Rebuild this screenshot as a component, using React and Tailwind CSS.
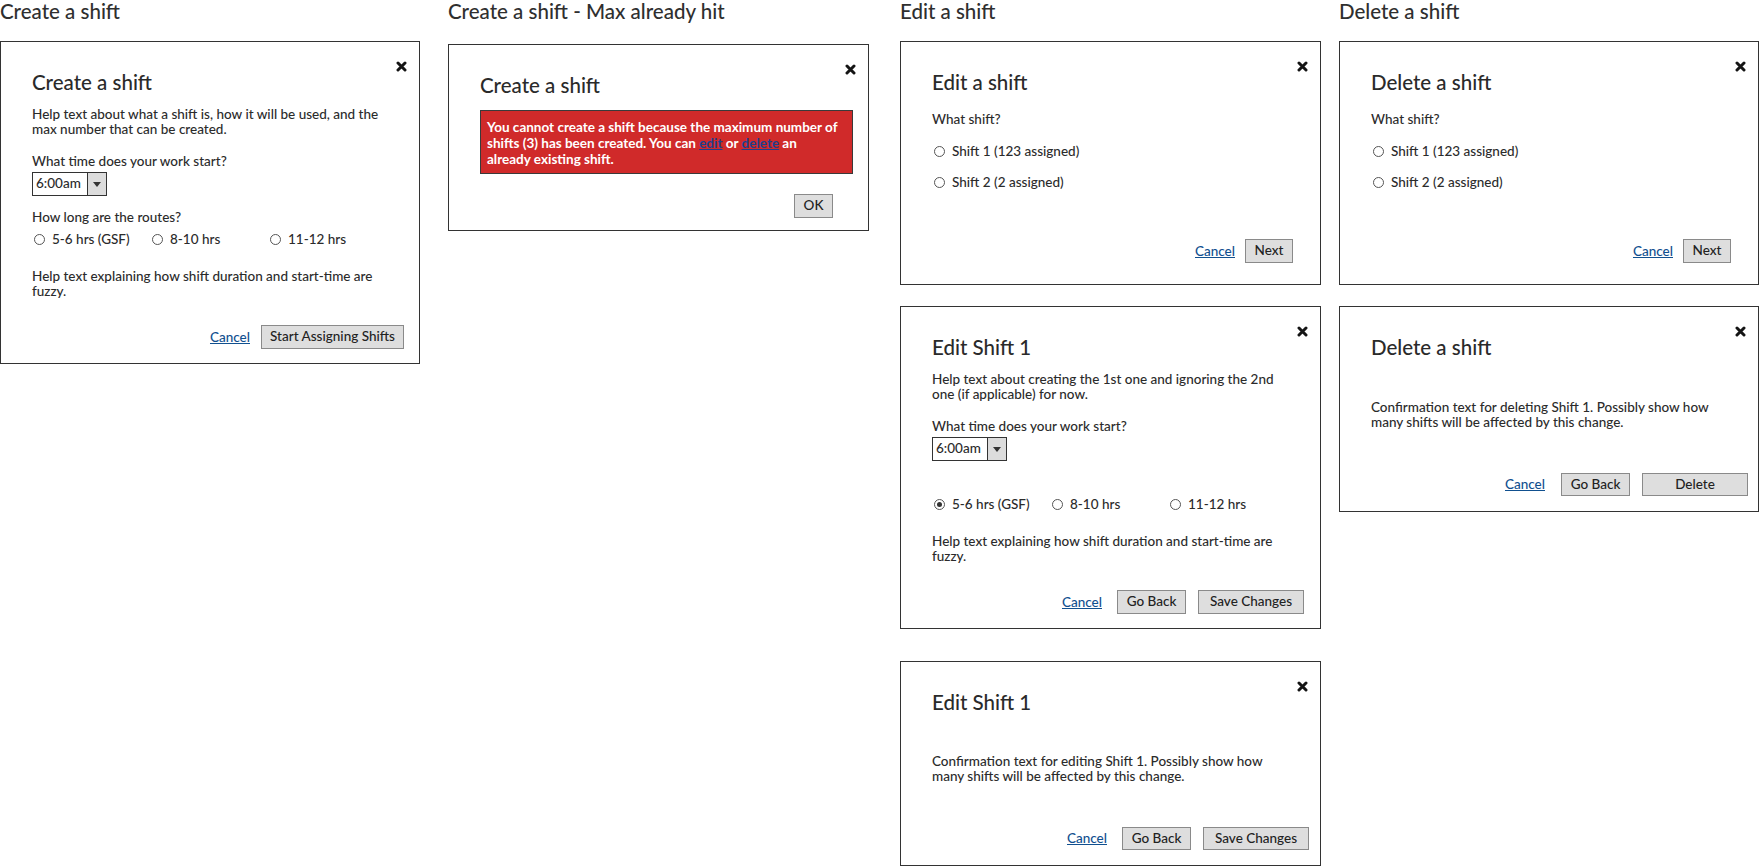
import React from 'react'

function CloseIcon() {
  return (
    <svg width="11" height="11" viewBox="0 0 11 11" className="absolute top-[19px] right-[12px]">
      <path d="M2 2 L9 9 M9 2 L2 9" stroke="#151515" strokeWidth="3" strokeLinecap="round" />
    </svg>
  )
}

function Button({ children, className = '' }) {
  return (
    <button
      className={`flex items-center justify-center border border-[#8a8a8a] bg-[#dedede] text-[13.5px] leading-none font-medium text-[#222] ${className}`}
    >
      {children}
    </button>
  )
}

function Cancel({ className = '' }) {
  return <a className={`text-[13.5px] leading-[15px] font-medium text-[#11508f] underline ${className}`}>Cancel</a>
}

function Radio({ checked, label, className = 'w-[118px]' }) {
  return (
    <label className={`flex h-[15px] items-center whitespace-nowrap pl-[2px] ${className}`}>
      <span className="mr-[7px] flex h-[11px] w-[11px] shrink-0 items-center justify-center rounded-full border border-[#555] bg-white">
        {checked && <span className="h-[5px] w-[5px] rounded-full bg-[#333]" />}
      </span>
      <span className="text-[13.5px] leading-[15px]">{label}</span>
    </label>
  )
}

function Select() {
  return (
    <div className="mt-[3px] flex h-[24px] w-[75px] border border-[#333] bg-white">
      <div className="flex-1 pl-[3px] text-[13.5px] leading-[21px]">6:00am</div>
      <div className="flex w-[19px] items-center justify-center border-l border-[#333] bg-[#dcdcdc]">
        <svg width="8" height="5" viewBox="0 0 8 5">
          <path d="M0 0 L8 0 L4 5 Z" fill="#333" />
        </svg>
      </div>
    </div>
  )
}

function Modal({ title, className = '', footerClass = '', footer, children }) {
  return (
    <div className={`relative flex flex-col border border-[#333] bg-white ${className}`}>
      <CloseIcon />
      <div className="pl-[31px] pt-[28px]">
        <h2 className="text-[20.5px] leading-[24px] text-[#2a2a2a]">{title}</h2>
        {children}
      </div>
      <div className={`mt-auto flex items-center justify-end ${footerClass}`}>{footer}</div>
    </div>
  )
}

function Heading({ children }) {
  return <h1 className="text-[20.5px] leading-[22px] text-[#2f2f2f]">{children}</h1>
}

function RouteFields({ checked, hideLabel }) {
  return (
    <>
      <p className="mt-[17px] text-[13.5px] leading-[15px]">What time does your work start?</p>
      <Select />
      <p className={`mt-[14px] text-[13.5px] leading-[15px] ${hideLabel ? 'invisible' : ''}`}>
        How long are the routes?
      </p>
      <div className="mt-[7px] flex">
        <Radio checked={checked} label="5-6 hrs (GSF)" />
        <Radio label="8-10 hrs" />
        <Radio label="11-12 hrs" />
      </div>
      <p className="mt-[22px] w-[345px] text-[13.5px] leading-[15px]">
        Help text explaining how shift duration and start-time are fuzzy.
      </p>
    </>
  )
}

function ShiftPicker() {
  return (
    <>
      <p className="mt-[18px] text-[13.5px] leading-[15px]">What shift?</p>
      <div className="mt-[17px]">
        <Radio className="w-auto" label="Shift 1 (123 assigned)" />
      </div>
      <div className="mt-[16px]">
        <Radio className="w-auto" label="Shift 2 (2 assigned)" />
      </div>
    </>
  )
}

export default function App() {
  return (
    <div className="flex h-[866px] w-[1759px] items-start overflow-hidden bg-white font-['Lato',sans-serif] font-medium text-[#2b2b2b]">
      {/* create */}
      <div className="w-[420px] shrink-0">
        <Heading>Create a shift</Heading>
        <Modal
          title="Create a shift"
          className="mt-[19px] h-[323px]"
          footerClass="pr-[15px] pb-[14px]"
          footer={
            <>
              <Cancel className="mr-[11px]" />
              <Button className="h-[24px] w-[143px]">Start Assigning Shifts</Button>
            </>
          }
        >
          <p className="mt-[13px] w-[355px] text-[13.5px] leading-[15px]">
            Help text about what a shift is, how it will be used, and the max number that can be created.
          </p>
          <RouteFields />
        </Modal>
      </div>

      {/* max hit */}
      <div className="ml-[28px] w-[421px] shrink-0">
        <Heading>Create a shift - Max already hit</Heading>
        <Modal
          title="Create a shift"
          className="mt-[22px] h-[187px]"
          footerClass="pr-[35px] pb-[12px]"
          footer={<Button className="h-[24px] w-[39px]">OK</Button>}
        >
          <div className="mt-[13px] mr-[15px] border border-[#3a3a3a] bg-[#d02a2a] pl-[6px] pr-[10px] pt-[8px] pb-[6px] text-[13.5px] font-bold leading-[16px] text-white">
            You cannot create a shift because the maximum number of shifts (3) has been created. You can{' '}
            <a className="text-[#1f3f8a] underline">edit</a> or <a className="text-[#1f3f8a] underline">delete</a> an
            already existing shift.
          </div>
        </Modal>
      </div>

      {/* edit */}
      <div className="ml-[31px] w-[421px] shrink-0">
        <Heading>Edit a shift</Heading>
        <Modal
          title="Edit a shift"
          className="mt-[19px] h-[244px]"
          footerClass="pr-[27px] pb-[21px]"
          footer={
            <>
              <Cancel className="mr-[10px]" />
              <Button className="h-[24px] w-[48px]">Next</Button>
            </>
          }
        >
          <ShiftPicker />
        </Modal>
        <Modal
          title="Edit Shift 1"
          className="mt-[21px] h-[323px]"
          footerClass="pr-[16px] pb-[14px]"
          footer={
            <>
              <Cancel className="mr-[15px]" />
              <Button className="mr-[12px] h-[24px] w-[69px]">Go Back</Button>
              <Button className="h-[24px] w-[106px]">Save Changes</Button>
            </>
          }
        >
          <p className="mt-[13px] w-[345px] text-[13.5px] leading-[15px]">
            Help text about creating the 1st one and ignoring the 2nd one (if applicable) for now.
          </p>
          <RouteFields checked hideLabel />
        </Modal>
        <Modal
          title="Edit Shift 1"
          className="mt-[32px] h-[205px]"
          footerClass="pr-[11px] pb-[15px]"
          footer={
            <>
              <Cancel className="mr-[15px]" />
              <Button className="mr-[12px] h-[23px] w-[69px]">Go Back</Button>
              <Button className="h-[23px] w-[106px]">Save Changes</Button>
            </>
          }
        >
          <p className="mt-[40px] w-[345px] text-[13.5px] leading-[15px]">
            Confirmation text for editing Shift 1. Possibly show how many shifts will be affected by this change.
          </p>
        </Modal>
      </div>

      {/* delete */}
      <div className="ml-[18px] w-[420px] shrink-0">
        <Heading>Delete a shift</Heading>
        <Modal
          title="Delete a shift"
          className="mt-[19px] h-[244px]"
          footerClass="pr-[27px] pb-[21px]"
          footer={
            <>
              <Cancel className="mr-[10px]" />
              <Button className="h-[24px] w-[48px]">Next</Button>
            </>
          }
        >
          <ShiftPicker />
        </Modal>
        <Modal
          title="Delete a shift"
          className="mt-[21px] h-[206px]"
          footerClass="pr-[10px] pb-[15px]"
          footer={
            <>
              <Cancel className="mr-[16px]" />
              <Button className="mr-[12px] h-[23px] w-[69px]">Go Back</Button>
              <Button className="h-[23px] w-[106px]">Delete</Button>
            </>
          }
        >
          <p className="mt-[41px] w-[345px] text-[13.5px] leading-[15px]">
            Confirmation text for deleting Shift 1. Possibly show how many shifts will be affected by this change.
          </p>
        </Modal>
      </div>
    </div>
  )
}
